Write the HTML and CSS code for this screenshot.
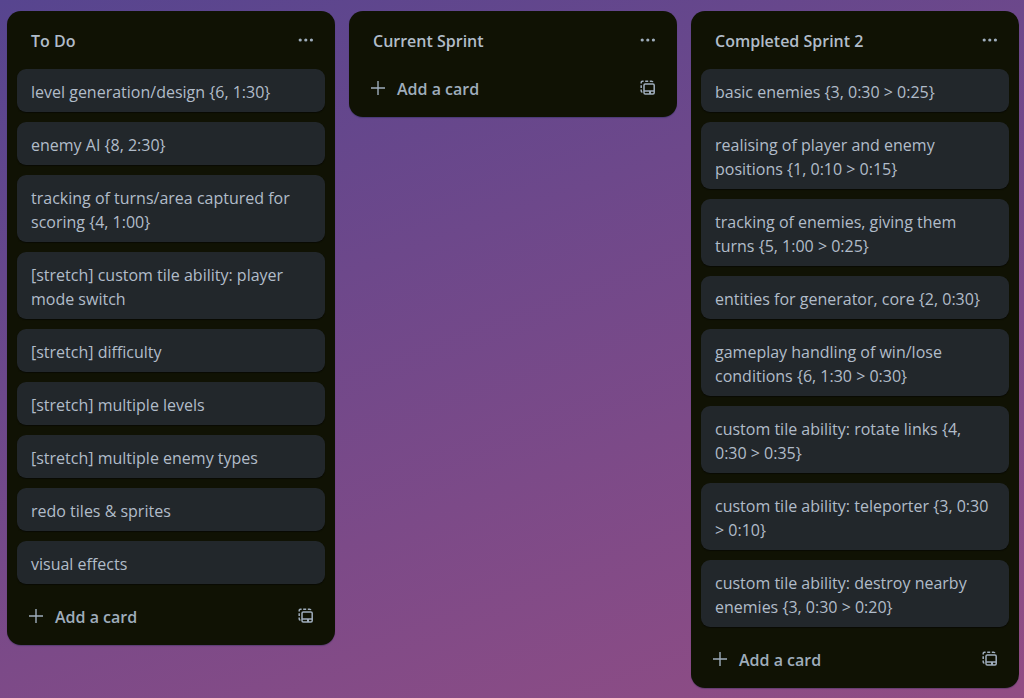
FILE: index.html
```html
<!DOCTYPE html>
<html lang="en">
<head>
<meta charset="utf-8">
<meta name="viewport" content="width=device-width, initial-scale=1">
<title>Sprint board</title>
<link rel="stylesheet" href="styles.css">
</head>
<body>
<svg class="sprite" aria-hidden="true">
  <symbol id="dots" viewBox="0 0 16 16"><g fill="currentColor"><circle cx="2.2" cy="8" r="1.6"/><circle cx="7.8" cy="8" r="1.6"/><circle cx="13.4" cy="8" r="1.6"/></g></symbol>
  <symbol id="plus" viewBox="0 0 16 16"><path d="M8 1v14M1 8h14" fill="none" stroke="currentColor" stroke-width="1.4"/></symbol>
  <symbol id="template" viewBox="0 0 16 16"><g fill="none" stroke="currentColor" stroke-width="1.5"><rect x="4" y="4" width="10.2" height="10" rx="1.2"/><path d="M4 11h10.2"/><path d="M10 11v3" stroke-width="2"/><path d="M1.2 3.6V2.4Q1.2 1.2 2.4 1.2H3.6M5.2 1.2H8.2M9.8 1.2H11.6Q12.6 1.2 12.8 2.2M1.2 5.2V8M1.2 9.6V11Q1.2 12 2.4 12.2"/></g></symbol>
</svg>
<main class="board">
  <section class="list">
    <header class="list-header"><h2 class="list-title">To Do</h2><button class="icon-button" type="button" aria-label="To Do list actions"><svg class="icon"><use href="#dots"/></svg></button></header>
    <ul class="cards">
      <li><a class="card" href="#">level generation/design {6, 1:30}</a></li>
      <li><a class="card" href="#">enemy AI {8, 2:30}</a></li>
      <li><a class="card" href="#">tracking of turns/area captured for scoring {4, 1:00}</a></li>
      <li><a class="card" href="#">[stretch] custom tile ability: player mode switch</a></li>
      <li><a class="card" href="#">[stretch] difficulty</a></li>
      <li><a class="card" href="#">[stretch] multiple levels</a></li>
      <li><a class="card" href="#">[stretch] multiple enemy types</a></li>
      <li><a class="card" href="#">redo tiles &amp; sprites</a></li>
      <li><a class="card" href="#">visual effects</a></li>
    </ul>
    <footer class="list-footer"><button class="add-button" type="button"><svg class="icon"><use href="#plus"/></svg><span class="add-label">Add a card</span></button><button class="icon-button" type="button" aria-label="Create from template"><svg class="icon"><use href="#template"/></svg></button></footer>
  </section>
  <section class="list">
    <header class="list-header"><h2 class="list-title">Current Sprint</h2><button class="icon-button" type="button" aria-label="Current Sprint list actions"><svg class="icon"><use href="#dots"/></svg></button></header>
    <footer class="list-footer"><button class="add-button" type="button"><svg class="icon"><use href="#plus"/></svg><span class="add-label">Add a card</span></button><button class="icon-button" type="button" aria-label="Create from template"><svg class="icon"><use href="#template"/></svg></button></footer>
  </section>
  <section class="list">
    <header class="list-header"><h2 class="list-title">Completed Sprint 2</h2><button class="icon-button" type="button" aria-label="Completed Sprint 2 list actions"><svg class="icon"><use href="#dots"/></svg></button></header>
    <ul class="cards">
      <li><a class="card" href="#">basic enemies {3, 0:30 &gt; 0:25}</a></li>
      <li><a class="card" href="#">realising of player and enemy positions {1, 0:10 &gt; 0:15}</a></li>
      <li><a class="card" href="#">tracking of enemies, giving them turns {5, 1:00 &gt; 0:25}</a></li>
      <li><a class="card" href="#">entities for generator, core {2, 0:30}</a></li>
      <li><a class="card" href="#">gameplay handling of win/lose conditions {6, 1:30 &gt; 0:30}</a></li>
      <li><a class="card" href="#">custom tile ability: rotate links {4, 0:30 &gt; 0:35}</a></li>
      <li><a class="card" href="#">custom tile ability: teleporter {3, 0:30 &gt; 0:10}</a></li>
      <li><a class="card" href="#">custom tile ability: destroy nearby enemies {3, 0:30 &gt; 0:20}</a></li>
    </ul>
    <footer class="list-footer"><button class="add-button" type="button"><svg class="icon"><use href="#plus"/></svg><span class="add-label">Add a card</span></button><button class="icon-button" type="button" aria-label="Create from template"><svg class="icon"><use href="#template"/></svg></button></footer>
  </section>
</main>
</body>
</html>
```

FILE: styles.css
```css
* {
  box-sizing: border-box;
}

body {
  margin: 0;
  min-height: 100vh;
  background: linear-gradient(160deg, #57458f, #924d84);
  color: #b1bcc9;
  font: 16px/24px "Open Sans", "Noto Sans", sans-serif;
}

.sprite {
  display: none;
}

.board {
  display: grid;
  grid-template-columns: repeat(3, minmax(260px, 1fr));
  align-items: start;
  gap: 14px;
  padding: 11px 5px 9px 7px;
}

.list {
  padding: 10px;
  border-radius: 14px;
  background: #101204;
  box-shadow: 0 1px 1px rgba(9, 30, 66, 0.3);
}

.list-header {
  display: flex;
  align-items: center;
  justify-content: space-between;
  margin-bottom: 10px;
  padding-left: 14px;
}

.list-title {
  margin: 0;
  padding-top: 2px;
  font-size: 16px;
  font-weight: 600;
}

.cards {
  display: grid;
  gap: 10px;
  margin: 0 0 13px;
  padding: 0;
  list-style: none;
}

.card {
  display: block;
  padding: 11px 14px 8px;
  border-radius: 9px;
  background: #22272b;
  box-shadow: 0 1px 1px rgba(3, 4, 4, 0.5);
  color: inherit;
  text-decoration: none;
}

.list-footer {
  display: flex;
  align-items: center;
  justify-content: space-between;
}

.icon-button,
.add-button {
  display: flex;
  align-items: center;
  height: 38px;
  border: 0;
  border-radius: 8px;
  background: none;
  color: #9fadbc;
  font: inherit;
  cursor: pointer;
}

.icon-button {
  justify-content: center;
  width: 38px;
  padding: 0;
}

.add-button {
  gap: 11px;
  padding: 0 11px;
  font-weight: 600;
}

.add-label {
  padding-top: 2px;
}

.icon {
  width: 16px;
  height: 16px;
}
```
